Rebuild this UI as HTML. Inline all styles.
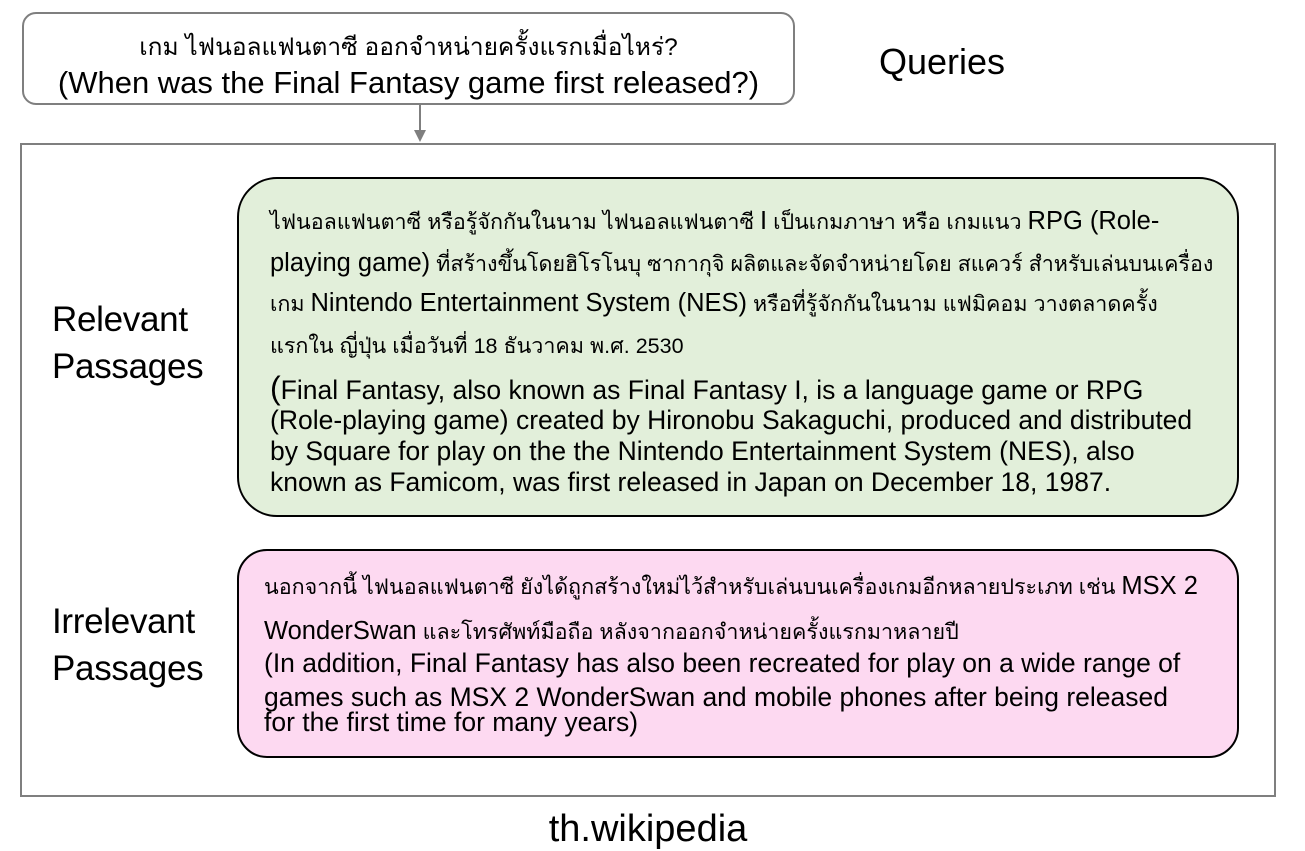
<!DOCTYPE html>
<html><head><meta charset="utf-8"><style>
body{margin:0;width:1305px;height:850px;background:#fff;position:relative;overflow:hidden;font-family:"Liberation Sans",sans-serif;color:#000}
.a{position:absolute;white-space:nowrap}
.th{font-size:21.5px}
.en{font-size:26.5px}
.th .en{font-size:25.5px}
</style></head><body>
<div class="a" style="left:22px;top:12px;width:769px;height:89px;border:2px solid #7f7f7f;border-radius:14px"></div>
<div class="a th" style="left:22px;width:773px;text-align:center;top:27px;font-size:24.5px">เกม ไฟนอลแฟนตาซี ออกจำหน่ายครั้งแรกเมื่อไหร่?</div>
<div class="a" style="left:22px;width:773px;text-align:center;top:65px;font-size:31px">(When was the Final Fantasy game first released?)</div>
<div class="a" style="left:879px;top:41px;font-size:36px">Queries</div>
<div class="a" style="left:419px;top:104px;width:2px;height:28px;background:#7f7f7f"></div>
<div class="a" style="left:414px;top:130px;width:0;height:0;border-left:6px solid transparent;border-right:6px solid transparent;border-top:12px solid #7f7f7f"></div>
<div class="a" style="left:20px;top:143px;width:1252px;height:650px;border:2px solid #7f7f7f"></div>
<div class="a" style="left:52px;top:296px;font-size:35px;line-height:47px;letter-spacing:-0.3px">Relevant<br>Passages</div>
<div class="a" style="left:52px;top:598px;font-size:35px;line-height:47px;letter-spacing:-0.3px">Irrelevant<br>Passages</div>
<div class="a" style="left:237px;top:177px;width:998px;height:336px;border:2px solid #000;border-radius:40px;background:#e2efda"></div>
<div class="a th" style="left:270px;top:205px">ไฟนอลแฟนตาซี หรือรู้จักกันในนาม ไฟนอลแฟนตาซี <span class="en">I</span> เป็นเกมภาษา หรือ เกมแนว <span class="en">RPG (Role-</span></div>
<div class="a th" style="left:270px;top:247px"><span class="en">playing game)</span> ที่สร้างขึ้นโดยฮิโรโนบุ ซากากุจิ ผลิตและจัดจำหน่ายโดย สแควร์ สำหรับเล่นบนเครื่อง</div>
<div class="a th" style="left:270px;top:287px">เกม <span class="en">Nintendo Entertainment System (NES)</span> หรือที่รู้จักกันในนาม แฟมิคอม วางตลาดครั้ง</div>
<div class="a th" style="left:270px;top:329px">แรกใน ญี่ปุ่น เมื่อวันที่ 18 ธันวาคม พ.ศ. 2530</div>
<div class="a en" style="left:270px;top:370px"><span style="font-size:32px">(</span>Final Fantasy, also known as Final Fantasy I, is a language game or RPG</div>
<div class="a en" style="left:270px;top:405px">(Role-playing game) created by Hironobu Sakaguchi, produced and distributed</div>
<div class="a en" style="left:270px;top:436px">by Square for play on the the Nintendo Entertainment System (NES), also</div>
<div class="a en" style="left:270px;top:467px">known as Famicom, was first released in Japan on December 18, 1987.</div>
<div class="a" style="left:237px;top:549px;width:998px;height:205px;border:2px solid #000;border-radius:30px;background:#fdd9f1"></div>
<div class="a th" style="left:264px;top:570px">นอกจากนี้ ไฟนอลแฟนตาซี ยังได้ถูกสร้างใหม่ไว้สำหรับเล่นบนเครื่องเกมอีกหลายประเภท เช่น <span class="en">MSX 2</span></div>
<div class="a th" style="left:264px;top:615px"><span class="en">WonderSwan</span> และโทรศัพท์มือถือ หลังจากออกจำหน่ายครั้งแรกมาหลายปี</div>
<div class="a en" style="left:264px;top:648px">(In addition, Final Fantasy has also been recreated for play on a wide range of</div>
<div class="a en" style="left:264px;top:682px">games such as MSX 2 WonderSwan and mobile phones after being released</div>
<div class="a en" style="left:264px;top:707px">for the first time for many years)</div>
<div class="a" style="left:0;width:1296px;text-align:center;top:808px;font-size:38px">th.wikipedia</div>
</body></html>
